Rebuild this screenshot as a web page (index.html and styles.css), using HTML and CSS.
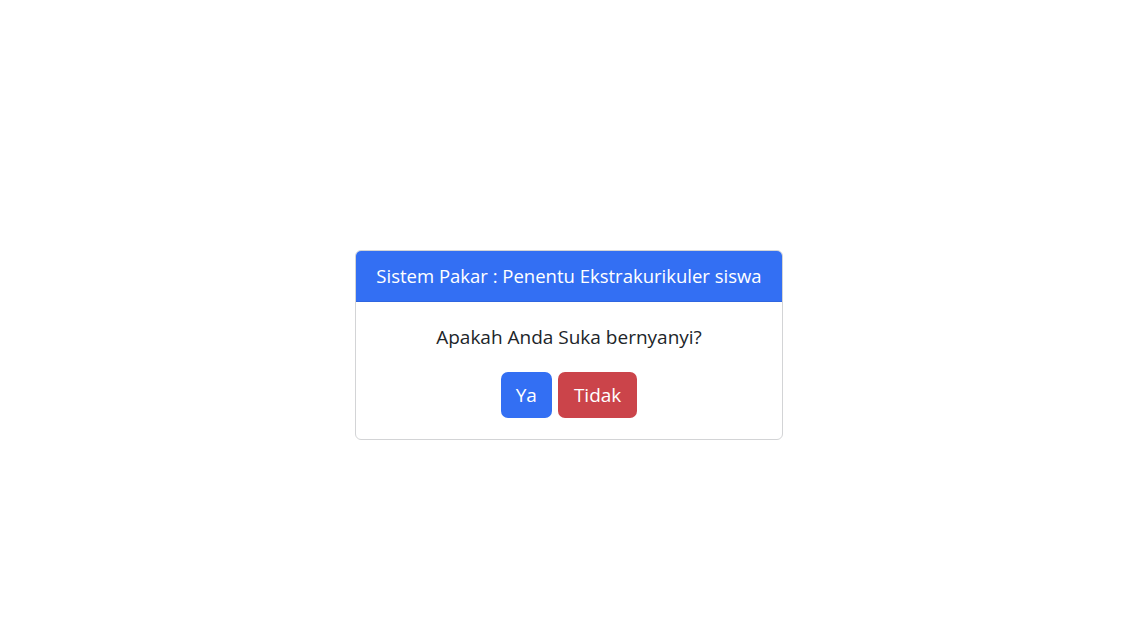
FILE: index.html
```html
<!DOCTYPE html>
<html lang="id">
<head>
<meta charset="utf-8">
<title>Sistem Pakar</title>
<link rel="stylesheet" href="styles.css">
</head>
<body>
<div class="page">
  <div class="card">
    <div class="card-header">Sistem Pakar : Penentu Ekstrakurikuler siswa</div>
    <div class="card-body">
      <p class="question">Apakah Anda Suka bernyanyi?</p>
      <div class="actions">
        <button class="btn btn-primary">Ya</button>
        <button class="btn btn-danger">Tidak</button>
      </div>
    </div>
  </div>
</div>
</body>
</html>
```
FILE: styles.css
```css
html, body {
  margin: 0;
  padding: 0;
  background: #ffffff;
}
body {
  font-family: "Open Sans", "Noto Sans", "Liberation Sans", sans-serif;
  color: #212529;
}
.page {
  padding: 250px 0 0 355px;
}
.card {
  width: 426px;
  border: 1px solid #d3d4d6;
  border-radius: 6px;
  overflow: hidden;
  text-align: center;
}
.card-header {
  background: #336ff3;
  color: #ffffff;
  font-size: 18.5px;
  line-height: 30px;
  padding: 10px 0;
  border-bottom: 1px solid #2f66e0;
  white-space: nowrap;
}
.card-body {
  padding: 20px 16px 21px;
}
.question {
  margin: 0 0 20px;
  font-size: 19px;
  line-height: 30px;
}
.actions {
  display: flex;
  justify-content: center;
  gap: 6px;
}
.btn {
  font-family: inherit;
  font-size: 19px;
  line-height: 30px;
  height: 46px;
  padding: 8px 15px;
  border: none;
  border-radius: 7px;
  color: #ffffff;
  cursor: pointer;
}
.btn-primary {
  background: #336ff3;
}
.btn-danger {
  background: #cb444a;
  padding: 8px 16px;
}
```
